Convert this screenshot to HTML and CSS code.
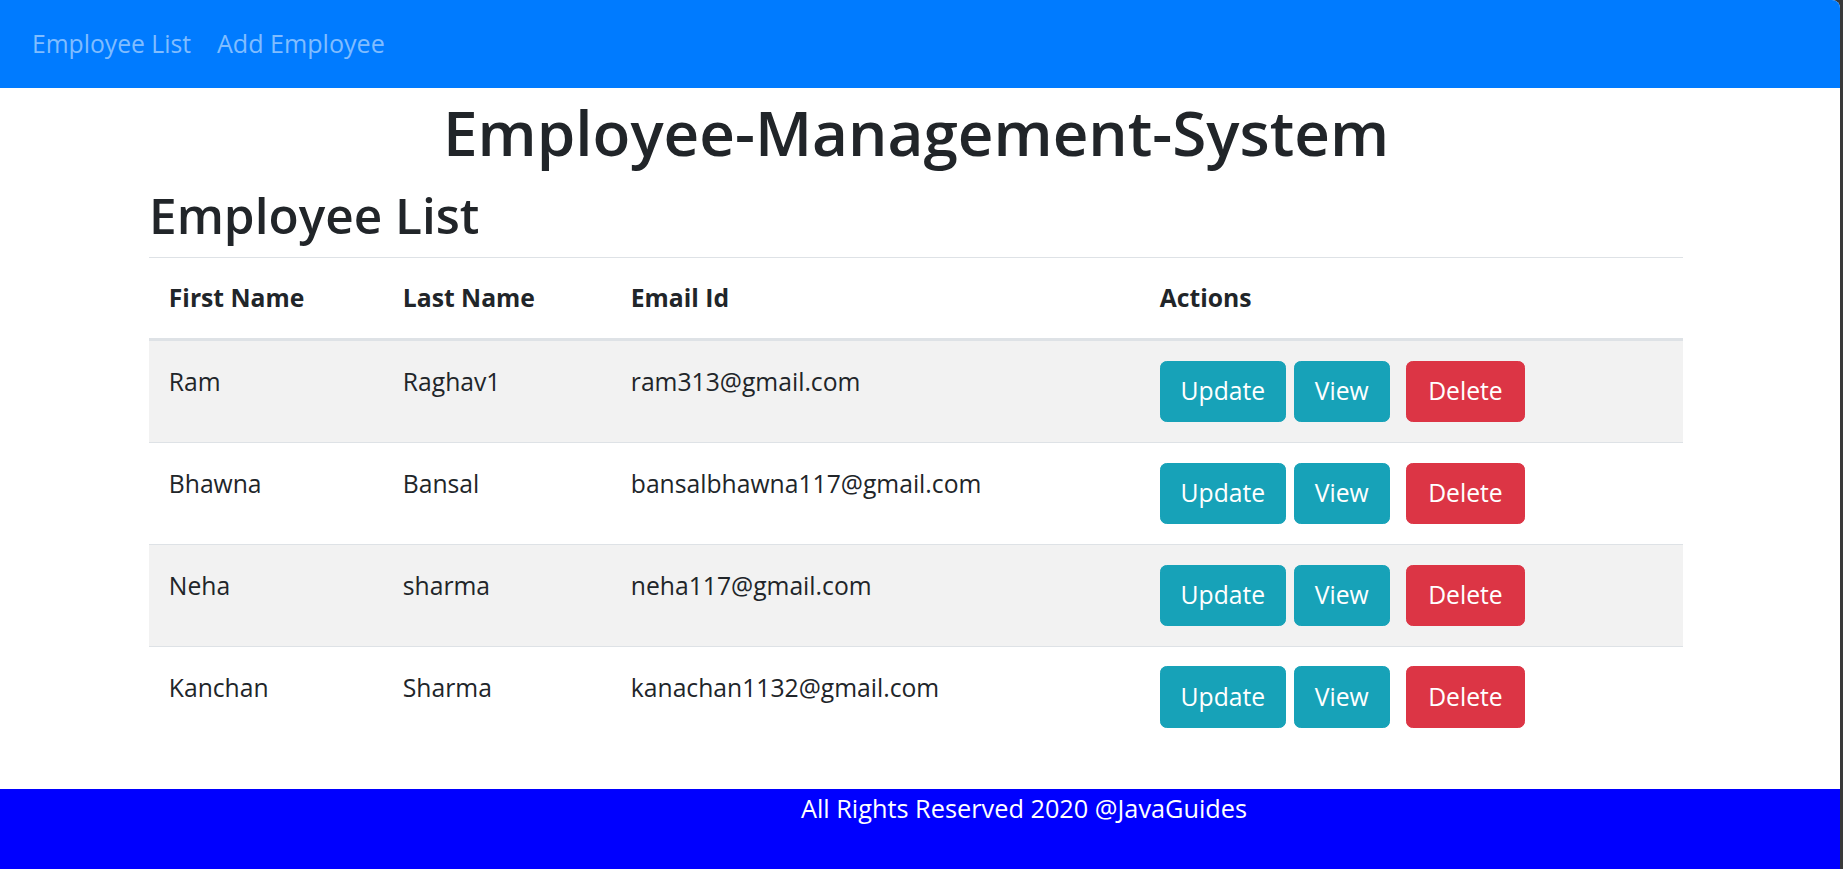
FILE: index.html
```html
<!DOCTYPE html>
<html lang="en">
<head>
<meta charset="utf-8">
<title>Employee-Management-System</title>
<link rel="stylesheet" href="styles.css">
</head>
<body>
<div class="app">
  <nav class="navbar">
    <a class="nav-link" href="#">Employee List</a>
    <a class="nav-link" href="#">Add Employee</a>
  </nav>
  <main class="container">
    <h1 class="title">Employee-Management-System</h1>
    <h2 class="subtitle">Employee List</h2>
    <table class="table">
      <colgroup>
        <col class="c1"><col class="c2"><col class="c3"><col class="c4">
      </colgroup>
      <thead>
        <tr><th>First Name</th><th>Last Name</th><th>Email Id</th><th>Actions</th></tr>
      </thead>
      <tbody>
        <tr class="striped">
          <td class="txt">Ram</td><td class="txt">Raghav1</td><td class="txt">ram313@gmail.com</td>
          <td><div class="actions"><button class="btn info">Update</button><button class="btn info view">View</button><button class="btn danger del">Delete</button></div></td>
        </tr>
        <tr>
          <td class="txt">Bhawna</td><td class="txt">Bansal</td><td class="txt">bansalbhawna117@gmail.com</td>
          <td><div class="actions"><button class="btn info">Update</button><button class="btn info view">View</button><button class="btn danger del">Delete</button></div></td>
        </tr>
        <tr class="striped">
          <td class="txt">Neha</td><td class="txt">sharma</td><td class="txt">neha117@gmail.com</td>
          <td><div class="actions"><button class="btn info">Update</button><button class="btn info view">View</button><button class="btn danger del">Delete</button></div></td>
        </tr>
        <tr>
          <td class="txt">Kanchan</td><td class="txt">Sharma</td><td class="txt">kanachan1132@gmail.com</td>
          <td><div class="actions"><button class="btn info">Update</button><button class="btn info view">View</button><button class="btn danger del">Delete</button></div></td>
        </tr>
      </tbody>
    </table>
  </main>
  <footer class="footer"><span>All Rights Reserved 2020 @JavaGuides</span></footer>
</div>
</body>
</html>
```
FILE: styles.css
```css
html, body {
  margin: 0;
  padding: 0;
  background: #3a3a3a;
}
body {
  font-family: "Open Sans", "Noto Sans", sans-serif;
  font-size: 24.7px;
  line-height: 39.6px;
  color: #212529;
}
.app {
  margin-right: 3px;
  min-height: 869px;
  background: #ffffff;
  display: flex;
  flex-direction: column;
  border-top-right-radius: 8px;
}
.navbar {
  height: 88px;
  box-sizing: border-box;
  background: #007bff;
  display: flex;
  align-items: flex-start;
  gap: 26px;
  padding: 24px 0 0 32px;
  border-top-right-radius: 8px;
}
.nav-link {
  color: #80bdff;
  text-decoration: none;
}
.nav-link:last-child {
  font-size: 25.1px;
}
.container {
  width: 1534px;
  margin-left: 149px;
}
.title {
  margin: 5px 0 0;
  text-align: center;
  font-size: 62px;
  line-height: 79px;
  font-weight: 600;
}
.subtitle {
  margin: 12px 0 10px;
  font-size: 49.5px;
  line-height: 63px;
  font-weight: 600;
}
.table {
  width: 1534px;
  border-collapse: collapse;
  table-layout: fixed;
}
.c1 { width: 234px; }
.c2 { width: 228px; }
.c3 { width: 529px; }
.c4 { width: 543px; }
.table th,
.table td {
  text-align: left;
  vertical-align: top;
  padding: 19.8px;
  border-top: 1px solid #dee2e6;
}
.table th {
  font-weight: 700;
  padding-top: 20.4px;
  border-bottom: 3px solid #dee2e6;
}
.table td.txt {
  padding-top: 21px;
}
.table tr.striped td {
  background: #f2f2f2;
}
.actions {
  display: flex;
}
.btn {
  font-family: inherit;
  font-size: 24.7px;
  line-height: 39.6px;
  padding: 9.9px 19.8px;
  border: 1.65px solid transparent;
  border-radius: 6.6px;
  color: #ffffff;
  cursor: pointer;
}
.info {
  background: #17a2b8;
  border-color: #17a2b8;
}
.danger {
  background: #dc3545;
  border-color: #dc3545;
  padding: 9.9px 21.6px;
}
.view { margin-left: 8px; }
.del { margin-left: 16px; }
.footer {
  margin-top: auto;
  height: 80px;
  background: #0000ff;
  color: #ffffff;
  text-align: center;
  padding-left: 208px;
  font-size: 25.3px;
}
```
